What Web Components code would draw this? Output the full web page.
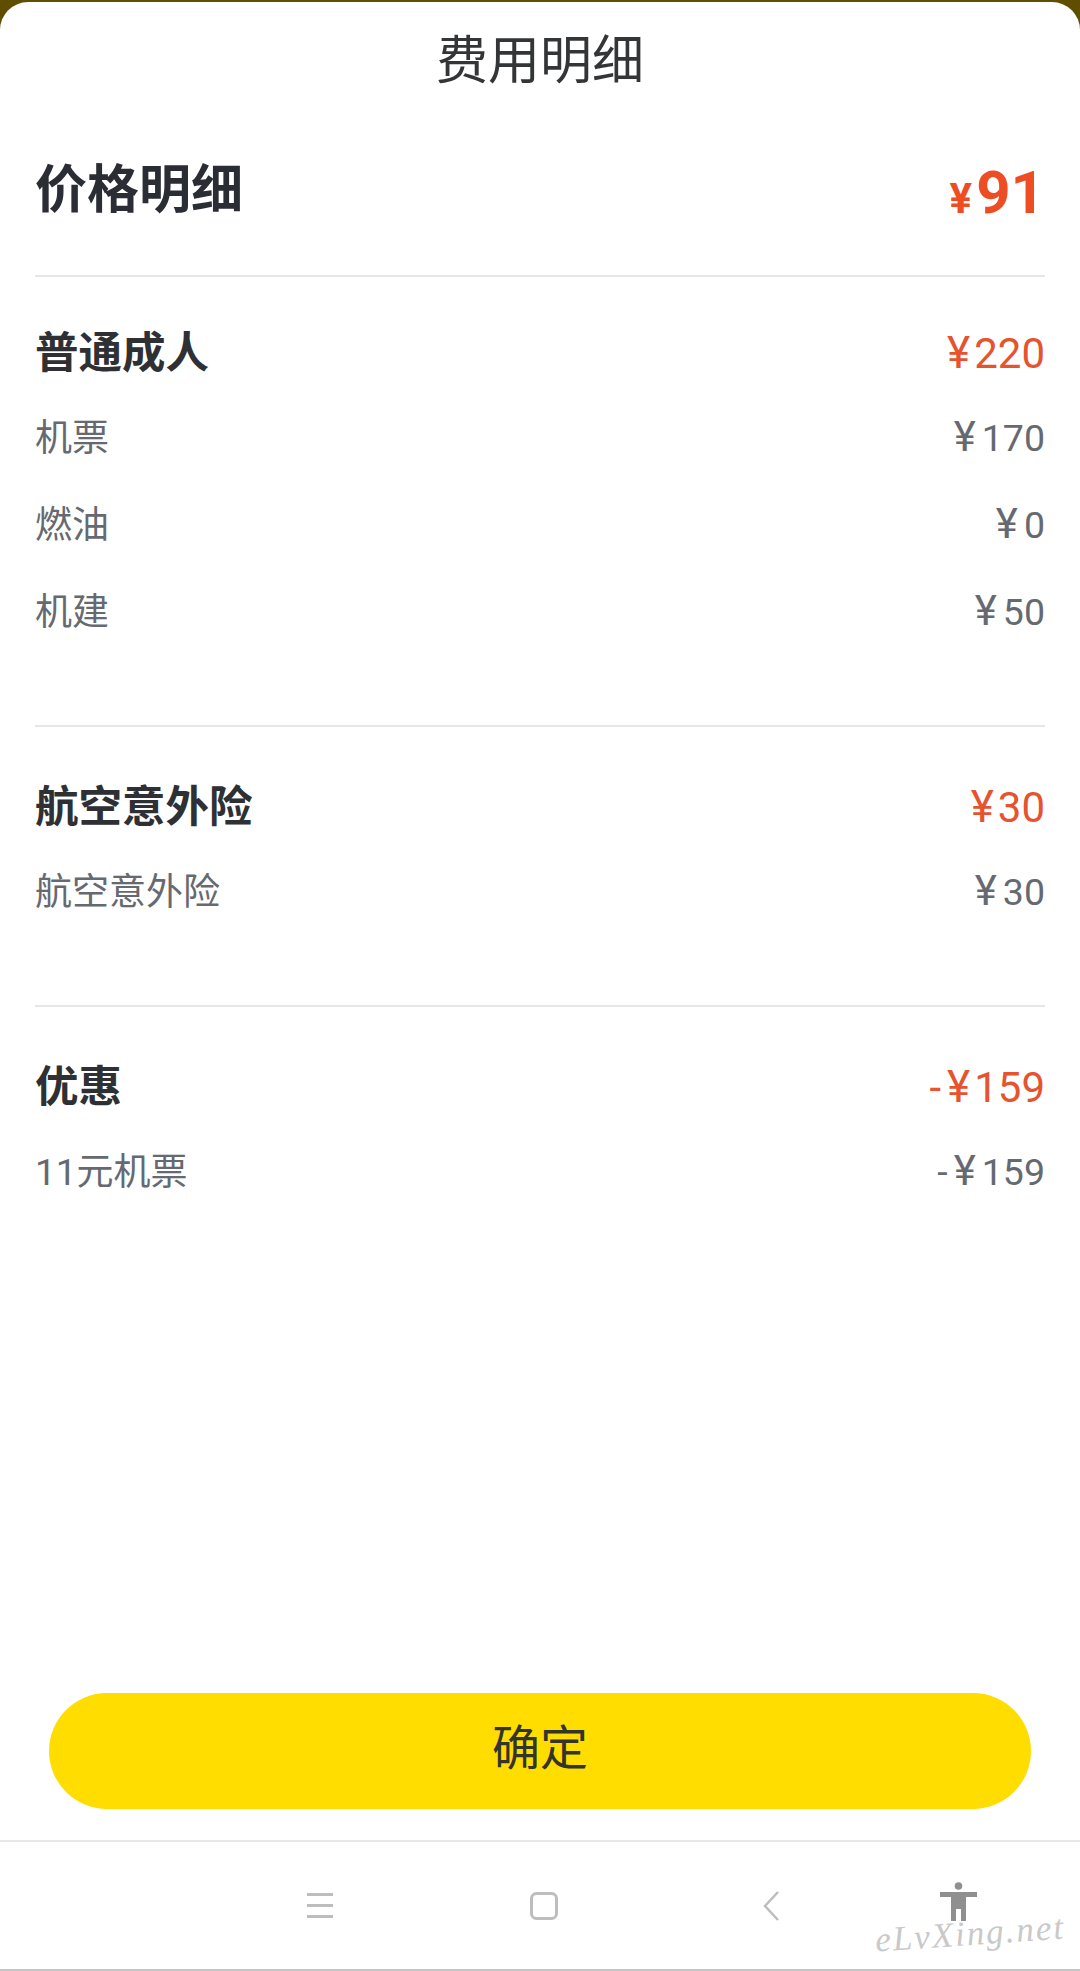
<!DOCTYPE html>
<html lang="zh-CN">
  <head>
    <meta charset="UTF-8" />
    <title>费用明细</title>
    <style>
      html, body { margin: 0; height: 100%; }
      body {
        background: #5f4e00;
        font-family: Roboto, "Noto Sans CJK SC", sans-serif;
      }
    </style>
  </head>
  <body>
    <fee-sheet>
      <fee-summary label="价格明细" amount="91"></fee-summary>
      <fee-section label="普通成人" amount="¥220" top="44" pad="70">
        <fee-row label="机票" amount="¥170"></fee-row>
        <fee-row label="燃油" amount="¥0"></fee-row>
        <fee-row label="机建" amount="¥50"></fee-row>
      </fee-section>
      <fee-section label="航空意外险" amount="¥30" top="48" pad="70">
        <fee-row label="航空意外险" amount="¥30"></fee-row>
      </fee-section>
      <fee-section label="优惠" amount="-¥159" top="48" pad="0" last>
        <fee-row label="11元机票" amount="-¥159"></fee-row>
      </fee-section>
      <confirm-button slot="footer">确定</confirm-button>
      <nav-bar slot="footer"></nav-bar>
    </fee-sheet>

    <script>
      // split "-¥220" so the currency sign can get its own spacing
      function money(text) {
        return text.replace("¥", '<span class="cur">¥</span>');
      }

      customElements.define(
        "fee-sheet",
        class extends HTMLElement {
          constructor() {
            super();
            this.attachShadow({ mode: "open" }).innerHTML = `
              <style>
                :host {
                  display: flex;
                  flex-direction: column;
                  box-sizing: border-box;
                  height: 1969px;
                  margin-top: 2px;
                  background: #fff;
                  border-radius: 28px 28px 0 0;
                }
                h1 {
                  box-sizing: border-box;
                  margin: 0;
                  height: 114px;
                  padding-top: 3px;
                  line-height: 114px;
                  text-align: center;
                  font-size: 52px;
                  font-weight: 400;
                  color: #333537;
                }
                main { flex: 1; padding: 0 35px; }
              </style>
              <h1>费用明细</h1>
              <main><slot></slot></main>
              <slot name="footer"></slot>
            `;
          }
        }
      );

      customElements.define(
        "fee-summary",
        class extends HTMLElement {
          connectedCallback() {
            this.attachShadow({ mode: "open" }).innerHTML = `
              <style>
                :host {
                  display: flex;
                  justify-content: space-between;
                  align-items: center;
                  height: 159px;
                  border-bottom: 2px solid #e6e6e6;
                  font-weight: 700;
                }
                .label { font-size: 52px; color: #2a2d33; margin-top: -21px; }
                .amount { font-size: 60px; color: #ee4d24; line-height: 1; margin: -6px 0 0 0; }
                .cur { font-size: 42px; margin-right: 4px; }
              </style>
              <span class="label">${this.getAttribute("label")}</span>
              <span class="amount"><span class="cur">¥</span>${this.getAttribute("amount")}</span>
            `;
          }
        }
      );

      customElements.define(
        "fee-section",
        class extends HTMLElement {
          connectedCallback() {
            var top = this.getAttribute("top");
            var pad = this.getAttribute("pad");
            this.attachShadow({ mode: "open" }).innerHTML = `
              <style>
                :host {
                  display: block;
                  padding: ${top}px 0 ${pad}px;
                  ${this.hasAttribute("last") ? "" : "border-bottom: 2px solid #e6e6e6;"}
                }
                header {
                  display: flex;
                  justify-content: space-between;
                  align-items: center;
                  height: 62px;
                  margin-bottom: 11px;
                }
                .label { font-size: 43.5px; font-weight: 700; color: #2e3033; margin-top: -6px; }
                .amount { font-size: 42px; color: #e5532f; margin-top: 2px; }
                .cur { margin: 0 4px 0 6px; font-size: 44px; }
              </style>
              <header>
                <span class="label">${this.getAttribute("label")}</span>
                <span class="amount">${money(this.getAttribute("amount"))}</span>
              </header>
              <slot></slot>
            `;
          }
        }
      );

      customElements.define(
        "fee-row",
        class extends HTMLElement {
          connectedCallback() {
            this.attachShadow({ mode: "open" }).innerHTML = `
              <style>
                :host {
                  display: flex;
                  justify-content: space-between;
                  align-items: center;
                  height: 87px;
                  font-size: 37.5px;
                  color: #666a70;
                }
                .label { margin-top: -6px; font-size: 37px; }
                .amount { margin-top: -2px; }
                .cur { margin: 0 6px 0 6px; font-size: 42px; }
              </style>
              <span class="label">${this.getAttribute("label")}</span>
              <span class="amount">${money(this.getAttribute("amount"))}</span>
            `;
          }
        }
      );

      customElements.define(
        "confirm-button",
        class extends HTMLElement {
          constructor() {
            super();
            this.attachShadow({ mode: "open" }).innerHTML = `
              <style>
                :host {
                  display: flex;
                  justify-content: center;
                  align-items: center;
                  box-sizing: border-box;
                  height: 116px;
                  margin: 0 49px 31px;
                  padding-bottom: 15px;
                  border-radius: 58px;
                  background: #ffdd00;
                  font-size: 48px;
                  color: #33342c;
                }
              </style>
              <slot></slot>
            `;
          }
        }
      );

      customElements.define(
        "nav-bar",
        class extends HTMLElement {
          constructor() {
            super();
            this.attachShadow({ mode: "open" }).innerHTML = `
              <style>
                :host {
                  display: flex;
                  align-items: center;
                  position: relative;
                  box-sizing: border-box;
                  height: 131px;
                  padding: 0 0 0 300px;
                  border-top: 2px solid #e8e8e8;
                  border-bottom: 2px solid #c4c4c4;
                }
                svg { display: block; flex: none; }
                .menu { width: 40px; height: 40px; }
                .home { width: 40px; height: 40px; margin-left: 184px; }
                .back { width: 40px; height: 40px; margin-left: 187px; }
                .person { width: 44px; height: 46px; margin-left: 146px; margin-top: -8px; }
                .mark {
                  position: absolute;
                  left: 875px;
                  top: 70px;
                  font: italic 35px/44px "Liberation Serif", serif;
                  letter-spacing: 2px;
                  color: #c9c9c9;
                  transform: rotate(-4deg);
                }
              </style>
              <svg class="menu" viewBox="0 0 40 40" fill="#bdbdbd">
                <rect x="7" y="7" width="26" height="3"></rect>
                <rect x="7" y="18" width="26" height="3"></rect>
                <rect x="7" y="29" width="26" height="3"></rect>
              </svg>
              <svg class="home" viewBox="0 0 40 40" fill="none" stroke="#bdbdbd" stroke-width="3">
                <rect x="7.5" y="7.5" width="25" height="25" rx="5"></rect>
              </svg>
              <svg class="back" viewBox="0 0 40 40" fill="none" stroke="#bdbdbd" stroke-width="2.5">
                <path d="M27 6 L14 20 L27 34"></path>
              </svg>
              <svg class="person" viewBox="0 0 44 46" fill="#8f8f8f">
                <circle cx="21.5" cy="7" r="3.8"></circle>
                <path d="M3 13 H40 V18 H29 V42 H24 V30 H19 V42 H14 V18 H3 Z"></path>
              </svg>
              <span class="mark">eLvXing.net</span>
            `;
          }
        }
      );
    </script>
  </body>
</html>
